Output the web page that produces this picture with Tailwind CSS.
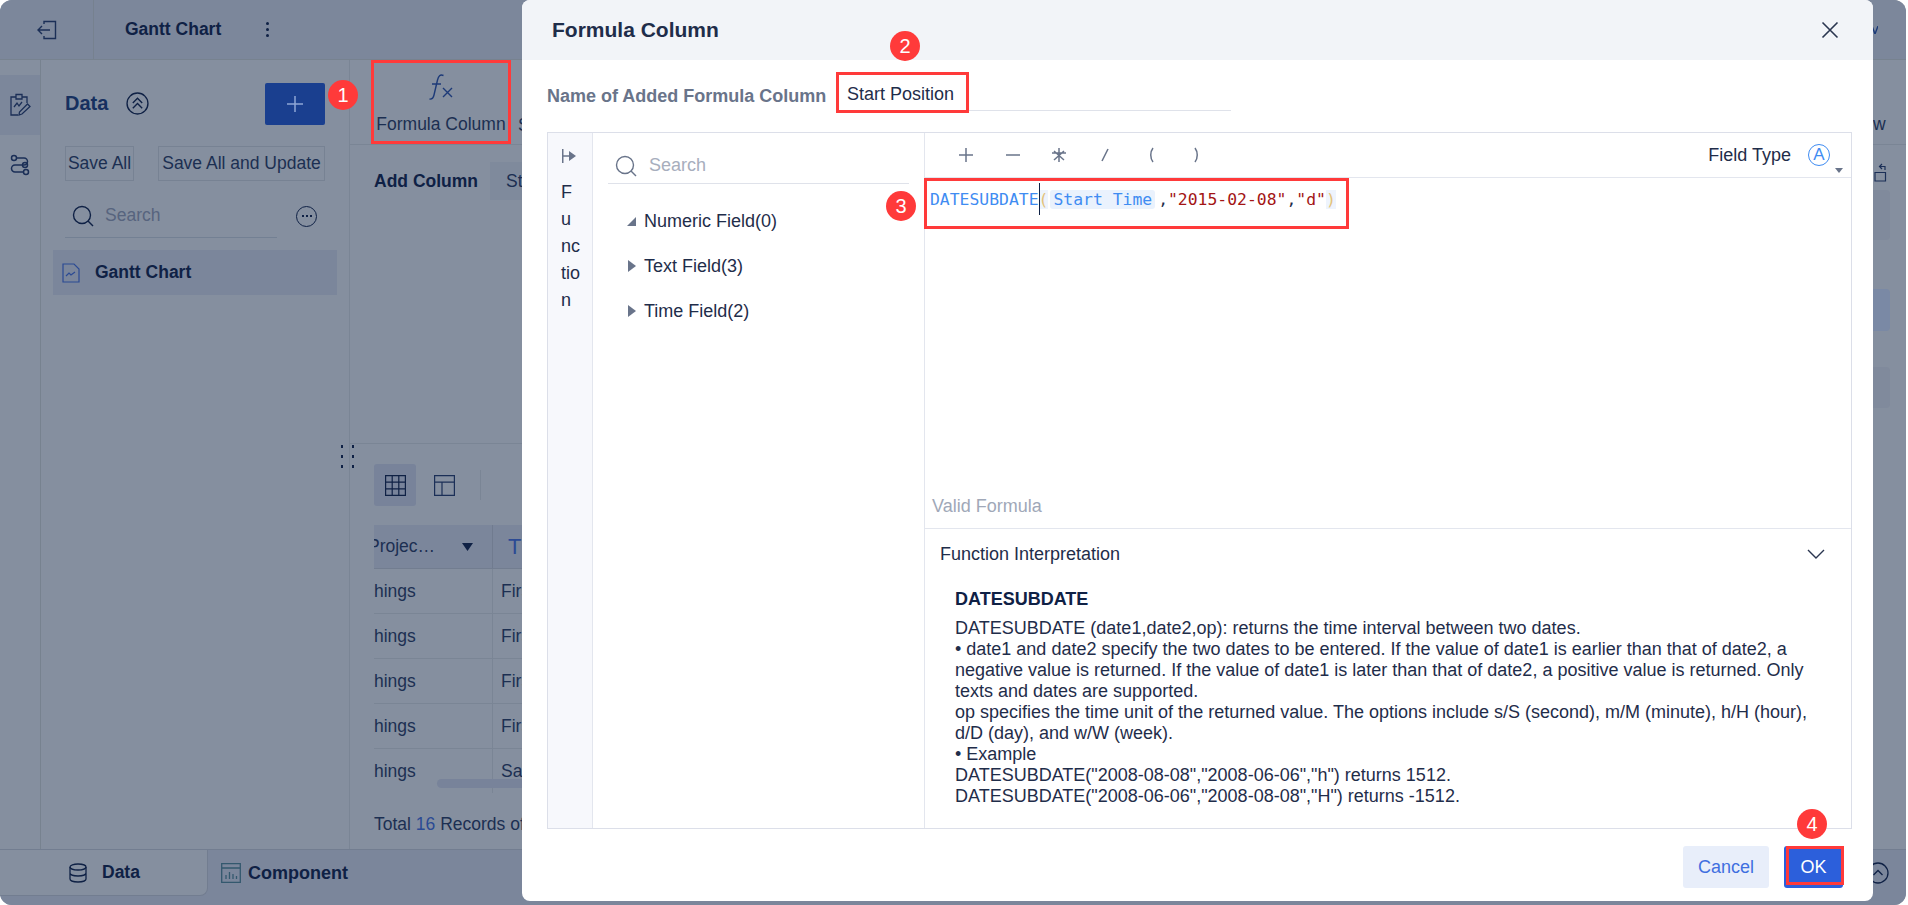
<!DOCTYPE html>
<html lang="en">
<head>
<meta charset="UTF-8">
<title>Formula Column</title>
<script src="https://cdn.jsdelivr.net/npm/@tailwindcss/browser@4"></script>
</head>
<body class="bg-white font-['Liberation_Sans',Arial,sans-serif] text-[#0f2145]">
<div class="relative w-[1908px] h-[905px] overflow-hidden">

  <!-- app behind the dimmed layer -->
  <div class="w-[1906px] h-[905px] flex flex-col bg-[#858f9f] rounded-[12px] overflow-hidden">
    <header class="h-[60px] shrink-0 flex items-center bg-[#7c879b] border-b border-[#77828f]">
      <div class="w-[94px] h-full flex items-center justify-center border-r border-[#76818f]">
        <svg class="w-[22px] h-[22px]" viewBox="0 0 22 22" fill="none" stroke="#1b2f57" stroke-width="1.4"><path d="M8 5V2.500h11.500v17H8V17M14 11H2M6 7l-4 4 4 4"/></svg>
      </div>
      <span class="ml-[31px] text-[17.500px] font-bold">Gantt Chart</span>
      <span class="ml-[45px] flex flex-col gap-[3px]"><i class="block w-[3px] h-[3px] rounded-full bg-[#0f2145]"></i><i class="block w-[3px] h-[3px] rounded-full bg-[#0f2145]"></i><i class="block w-[3px] h-[3px] rounded-full bg-[#0f2145]"></i></span>
      <svg class="ml-auto mr-[28px] w-[6px] h-[8px]" viewBox="0 0 6 8" fill="none" stroke="#1b3a78" stroke-width="1.400"><path d="M0 0l3 8 3-8"/></svg>
    </header>

    <div class="flex-1 flex min-h-0">
      <!-- icon rail -->
      <div class="w-[41px] shrink-0 border-r border-[#77828f] pt-[15px]">
        <div class="h-[60px] bg-[#7c879b] flex items-center justify-center">
          <svg class="w-[22px] h-[24px]" viewBox="0 0 22 24" fill="none" stroke="#1b2f57" stroke-width="1.3"><path d="M7 4H2v18h7M13 4h5v6M7 1.500h6V6H7zM5 14l3-4 2 3 3-4M13 21l-3 1 .5-3 8-8 2.500 2.500z"/></svg>
        </div>
        <div class="h-[60px] flex items-center justify-center">
          <svg class="w-[22px] h-[22px]" viewBox="0 0 22 22" fill="none" stroke="#1b2f57" stroke-width="1.5"><circle cx="5" cy="4" r="2.500"/><circle cx="16" cy="11" r="2.500"/><circle cx="17" cy="18" r="2.500"/><path d="M8 4h7a3.500 3.500 0 0 1 0 7H13M13 11H6a3.500 3.500 0 0 0 0 7h8"/></svg>
        </div>
      </div>

      <!-- data panel -->
      <div class="w-[309px] shrink-0 border-r border-[#7a8595] flex flex-col">
        <div class="h-[86px] shrink-0 flex items-center pl-[24px] pr-[24px]">
          <span class="text-[20px] font-bold text-[#16305f]">Data</span>
          <svg class="ml-[18px] w-[23px] h-[23px]" viewBox="0 0 22 22" fill="none" stroke="#0f2145" stroke-width="1.3"><circle cx="11" cy="11" r="10"/><path d="M6.500 10.500 11 6l4.500 4.500M6.500 15.500 11 11l4.500 4.500"/></svg>
          <span class="ml-auto mt-[2px] w-[60px] h-[42px] rounded-[2px] bg-[#1a3f8f] flex items-center justify-center">
            <svg class="w-[16px] h-[16px]" viewBox="0 0 16 16" stroke="#8fa6d6" stroke-width="1.5"><path d="M8 0v16M0 8h16"/></svg>
          </span>
        </div>
        <div class="flex pl-[24px] gap-[24px] text-[17.500px] text-[#1c2f52] whitespace-nowrap">
          <span class="w-[69px] h-[35px] flex items-center justify-center border border-[#778293]">Save All</span>
          <span class="w-[167px] h-[35px] flex items-center justify-center border border-[#778293]">Save All and Update</span>
        </div>
        <div class="mt-[13px] ml-[24px] flex items-center">
          <div class="w-[212px] h-[44px] flex items-center border-b border-[#738093] pl-[7px]">
            <svg class="w-[22px] h-[22px]" viewBox="0 0 22 22" fill="none" stroke="#0f2145" stroke-width="1.4"><circle cx="10" cy="10" r="8.500"/><path d="m16 16 5 5"/></svg>
            <span class="ml-[11px] text-[17.500px] text-[#57647e]">Search</span>
          </div>
          <span class="ml-[19px] shrink-0 w-[21px] h-[21px] rounded-full border border-[#0f2145] flex items-center justify-center gap-[2px]"><i class="block w-[2px] h-[2px] bg-[#0f2145]"></i><i class="block w-[2px] h-[2px] bg-[#0f2145]"></i><i class="block w-[2px] h-[2px] bg-[#0f2145]"></i></span>
        </div>
        <div class="mt-[12px] ml-[12px] w-[284px] h-[45px] bg-[#7b869b] flex items-center pl-[9px]">
          <svg class="w-[18px] h-[20px]" viewBox="0 0 18 20" fill="none" stroke="#2b4a94" stroke-width="1.2"><path d="M1 1h11l5 5v13H1zM4 13l3-3 2 2 4-3"/></svg>
          <span class="ml-[15px] text-[17.500px] font-bold">Gantt Chart</span>
        </div>
      </div>

      <!-- main area -->
      <div class="flex-1 min-w-0 flex flex-col overflow-hidden">
        <div class="h-[85px] shrink-0 border-b border-[#7a8595] flex pl-[21px] whitespace-nowrap">
          <div class="w-[140px] h-[84px] border-[3px] border-[#ff3a3a] flex flex-col items-center pt-[11px] text-[17.500px] text-[#1c2f52]">
            <svg class="w-[26px] h-[27px]" viewBox="0 0 26 27" fill="none" stroke="#1d3a78" stroke-width="1.400"><path d="M15.500 1.500C12 0 10.500 2 9.500 6L6 21c-.8 3.500-2 4.500-4.500 4M4 10h9M15 14l9 9M24 14l-9 9"/></svg>
            <span class="mt-[10px]">Formula Column</span>
          </div>
          <span class="ml-[7px] mt-[52px] text-[17.500px] text-[#1c2f52]">Sort</span>
        </div>
        <div class="h-[299px] shrink-0 pl-[24px] pt-[17px] border-b border-[#7a8595]">
          <div class="flex items-center">
            <span class="text-[17.500px] font-bold">Add Column</span>
            <span class="ml-[12px] h-[38px] w-[60px] bg-[#7f8a9c] flex items-center pl-[16px] text-[17.500px] text-[#1c2f52] overflow-hidden">Start</span>
          </div>
        </div>
        <div class="flex items-center pl-[24px] mt-[20px] gap-[7px]">
          <span class="w-[42px] h-[42px] rounded-[3px] bg-[#78839a] flex items-center justify-center">
            <svg class="w-[21px] h-[21px]" viewBox="0 0 21 21" fill="none" stroke="#0f2145" stroke-width="1.2"><path d="M.6.6h19.800v19.800H.6zM7.200.6v19.800M13.800.6v19.800M.6 7.200h19.800M.6 13.800h19.800"/></svg>
          </span>
          <span class="w-[42px] h-[42px] flex items-center justify-center">
            <svg class="w-[21px] h-[21px]" viewBox="0 0 21 21" fill="none" stroke="#1b2f57" stroke-width="1.2"><path d="M.6.6h19.800v19.800H.6zM.6 7.200h19.800M8 7.200v13.200"/></svg>
          </span>
          <span class="ml-[8px] w-px h-[30px] bg-[#7a8595]"></span>
        </div>
        <div class="ml-[24px] mt-[19px] text-[17.500px] text-[#1c2f52] overflow-hidden whitespace-nowrap">
          <div class="h-[44px] flex items-center bg-[#7b869b] border-b border-[#727d90]">
            <span class="w-[119px] shrink-0 flex items-center border-r border-[#707b8f] h-full"><span class="-ml-[6px]">Projec…</span><svg class="ml-[27px] w-[11px] h-[8px]" viewBox="0 0 11 8"><path d="M0 0h11L5.500 8z" fill="#0f2145"/></svg></span>
            <span class="ml-[15px] text-[22px] text-[#2b4a94]">T</span>
          </div>
          <div class="h-[45px] flex items-center border-b border-[#7a8595]"><span class="w-[119px] shrink-0 h-full flex items-center border-r border-[#7a8595]">hings</span><span class="ml-[8px]">First</span></div>
          <div class="h-[45px] flex items-center border-b border-[#7a8595]"><span class="w-[119px] shrink-0 h-full flex items-center border-r border-[#7a8595]">hings</span><span class="ml-[8px]">First</span></div>
          <div class="h-[45px] flex items-center border-b border-[#7a8595]"><span class="w-[119px] shrink-0 h-full flex items-center border-r border-[#7a8595]">hings</span><span class="ml-[8px]">First</span></div>
          <div class="h-[45px] flex items-center border-b border-[#7a8595]"><span class="w-[119px] shrink-0 h-full flex items-center border-r border-[#7a8595]">hings</span><span class="ml-[8px]">First</span></div>
          <div class="h-[44px] flex items-center"><span class="w-[119px] shrink-0 h-full flex items-center border-r border-[#7a8595]">hings</span><span class="ml-[8px]">Same</span></div>
        </div>
        <div class="ml-[24px] mt-[21px] leading-[20px] text-[17.500px] text-[#1c2f52]">Total <span class="text-[#2b4a94]">16</span> Records of</div>
      </div>

      <!-- right side panel, only a sliver shows past the dialog -->
      <div class="w-[46px] shrink-0 flex flex-col">
        <div class="h-[85px] shrink-0 border-b border-[#7a8595] pl-[13px] pt-[53px] text-[17.500px] leading-[22px] text-[#1c2f52]">w</div>
        <svg class="mt-[18px] ml-[14px] w-[13px] h-[19px]" viewBox="0 0 13 19" fill="none" stroke="#1b2f57" stroke-width="1.200"><path d="M1 9.500h10.500v8.500H1zM11 7V3.500H6M8 1 5.500 3.500 8 6"/></svg>
        <div class="mt-[8px] w-[30px] h-[50px] rounded-[4px] bg-[#808a9c]"></div>
        <div class="mt-[49px] w-[30px] h-[42px] rounded-[4px] bg-[#7a89a5]"></div>
        <div class="mt-[36px] w-[30px] h-[41px] rounded-[4px] bg-[#808a9c]"></div>
      </div>
    </div>

    <!-- bottom tabs -->
    <div class="h-[56px] shrink-0 flex bg-[#7b869b] border-t border-[#727d90]">
      <div class="w-[208px] h-[46px] bg-[#858f9f] rounded-br-[8px] border-b border-r border-[#727d90] flex items-center pl-[69px]">
        <svg class="w-[18px] h-[20px]" viewBox="0 0 18 20" fill="none" stroke="#0f2145" stroke-width="1.3"><ellipse cx="9" cy="4" rx="8" ry="3"/><path d="M1 4v12c0 1.700 3.600 3 8 3s8-1.300 8-3V4M1 10c0 1.700 3.600 3 8 3s8-1.300 8-3"/></svg>
        <span class="ml-[15px] text-[17.500px] font-bold">Data</span>
      </div>
      <div class="h-[46px] flex items-center pl-[13px]">
        <svg class="w-[20px] h-[20px]" viewBox="0 0 20 20" fill="none" stroke="#33586e" stroke-width="1.3"><path d="M.7.7h18.600v18.600H.7zM.7 5h18.600M5 16v-4M8.500 16V9M12 16v-5M15.500 16v-3"/></svg>
        <span class="ml-[7px] text-[18px] font-bold">Component</span>
      </div>
      <svg class="ml-auto mr-[17px] mt-[12px] w-[22px] h-[22px]" viewBox="0 0 22 22" fill="none" stroke="#0f2145" stroke-width="1.3"><circle cx="11" cy="11" r="10"/><path d="M6.500 13 11 8.500l4.500 4.500"/></svg>
    </div>
  </div>

  <!-- splitter grip and table scrollbar -->
  <div class="absolute left-[341px] top-[445px] grid grid-cols-2 gap-x-[9px] gap-y-[7px]">
    <i class="block w-[2px] h-[3px] bg-[#0f2145]"></i><i class="block w-[2px] h-[3px] bg-[#0f2145]"></i>
    <i class="block w-[2px] h-[3px] bg-[#0f2145]"></i><i class="block w-[2px] h-[3px] bg-[#0f2145]"></i>
    <i class="block w-[2px] h-[3px] bg-[#0f2145]"></i><i class="block w-[2px] h-[3px] bg-[#0f2145]"></i>
  </div>
  <div class="absolute left-[437px] top-[779px] w-[90px] h-[9px] rounded-full bg-[#78839a]"></div>

  <!-- formula column dialog -->
  <div class="absolute left-[522px] top-0 w-[1351px] h-[901px] bg-white rounded-[8px] overflow-hidden flex flex-col">
    <div class="h-[60px] shrink-0 bg-[#f2f4f8] flex items-center pl-[30px] pr-[34px]">
      <span class="text-[21px] font-bold text-[#1f2d4a]">Formula Column</span>
      <svg class="ml-auto w-[18px] h-[18px]" viewBox="0 0 18 18" stroke="#2a3650" stroke-width="1.600"><path d="M1.500 1.500l15 15M16.500 1.500l-15 15"/></svg>
    </div>
    <div class="h-[72px] shrink-0 flex items-end pl-[25px] pb-[21px]">
      <span class="w-[290px] mb-[4px] text-[18px] leading-[22px] font-bold text-[#69748a] whitespace-nowrap">Name of Added Formula Column</span>
      <span class="w-[394px] h-[40px] flex items-center pl-[10px] pt-[7px] border-b border-[#dfe2ea] text-[18px] text-[#1f2d4a]">Start Position</span>
    </div>
    <div class="ml-[25px] w-[1305px] h-[697px] border border-[#dcdfe9] flex">
      <div class="w-[45px] shrink-0 bg-[#f7f8fc] border-r border-[#e3e6ee] pl-[13px] pt-[16px] text-[18px] leading-[27px] text-[#1f2d4a]">
        <svg class="w-[16px] h-[14px] mb-[16px]" viewBox="0 0 16 14" fill="#69748a"><path d="M1 0h1.500v14H1zM2.500 6.200H8V2l7 5-7 5V7.800H2.500z"/></svg>
        <div class="w-[22px]">F<br>u<br>nc<br>tio<br>n</div>
      </div>
      <div class="w-[332px] shrink-0 border-r border-[#e3e6ee] text-[18px] text-[#1f2d4a]">
        <div class="mx-[15px] mt-[7px] h-[44px] flex items-center pl-[7px] pt-[8px] border-b border-[#dfe2ea]">
          <svg class="w-[22px] h-[22px]" viewBox="0 0 22 22" fill="none" stroke="#69748a" stroke-width="1.4"><circle cx="10" cy="10" r="8.500"/><path d="m16 16 5 5"/></svg>
          <span class="ml-[12px] text-[#a7aebd]">Search</span>
        </div>
        <div class="pl-[34px] mt-[25px] flex flex-col gap-[21px]">
          <div class="flex items-center h-[24px]"><svg class="w-[9px] h-[9px]" viewBox="0 0 9 9"><path d="M9 0v9H0z" fill="#69748a"/></svg><span class="ml-[8px]">Numeric Field(0)</span></div>
          <div class="flex items-center h-[24px]"><svg class="w-[9px] h-[12px]" viewBox="0 0 9 12"><path d="M1 0l8 6-8 6z" fill="#69748a"/></svg><span class="ml-[8px]">Text Field(3)</span></div>
          <div class="flex items-center h-[24px]"><svg class="w-[9px] h-[12px]" viewBox="0 0 9 12"><path d="M1 0l8 6-8 6z" fill="#69748a"/></svg><span class="ml-[8px]">Time Field(2)</span></div>
        </div>
      </div>
      <div class="flex-1 min-w-0 flex flex-col">
        <div class="h-[45px] shrink-0 border-b border-[#e3e6ee] flex items-center pl-[34px] pr-[21px] text-[#69748a]">
          <svg class="w-[14px] h-[14px]" viewBox="0 0 14 14" stroke="#69748a" stroke-width="1.5"><path d="M7 0v14M0 7h14"/></svg>
          <svg class="ml-[33px] w-[14px] h-[14px]" viewBox="0 0 14 14" stroke="#69748a" stroke-width="1.5"><path d="M0 7h14"/></svg>
          <svg class="ml-[32px] w-[14px] h-[14px]" viewBox="0 0 14 14" stroke="#69748a" stroke-width="1.5"><path d="M0 5h14M7 0v14M2 12l10-9M12 12 2 3"/></svg>
          <svg class="ml-[33px] w-[12px] h-[14px]" viewBox="0 0 12 14" stroke="#69748a" stroke-width="1.5"><path d="M9 1 3 13"/></svg>
          <svg class="ml-[36px] w-[8px] h-[16px]" viewBox="0 0 8 16" fill="none" stroke="#69748a" stroke-width="1.5"><path d="M6 1C3 5 3 11 6 15"/></svg>
          <svg class="ml-[38px] w-[8px] h-[16px]" viewBox="0 0 8 16" fill="none" stroke="#69748a" stroke-width="1.5"><path d="M2 1c3 4 3 10 0 14"/></svg>
          <span class="ml-auto text-[18px] text-[#1f2d4a]">Field Type</span>
          <span class="relative ml-[17px] w-[22px] h-[22px] rounded-full border-[1.5px] border-[#3f8cf2] flex items-center justify-center text-[17px] text-[#3f8cf2]">A
            <svg class="absolute left-[26px] top-[23px] w-[8px] h-[5px]" viewBox="0 0 8 5"><path d="M0 0h8L4 5z" fill="#69748a"/></svg>
          </span>
        </div>
        <div class="h-[303px] shrink-0 pl-[5px] pt-[10px] font-['DejaVu_Sans_Mono',monospace] text-[16.400px] leading-[24px] whitespace-nowrap">
          <span class="text-[#3f8cf2]">DATESUBDATE</span><span class="relative text-[#e3c27a] bg-[#eef4fd]"><i class="absolute left-0 top-[-7px] h-[32px] w-px bg-[#0f2145]"></i>(</span><span class="ml-[2px] text-[#3f8cf2] bg-[#eaf2fd] rounded-[3px] px-[3px]">Start Time</span><span class="ml-[3px] text-[#1f2d4a]">,</span><span class="text-[#a31515]">"2015-02-08"</span><span class="text-[#1f2d4a]">,</span><span class="text-[#a31515]">"d"</span><span class="text-[#e3c27a] bg-[#eef4fd]">)</span>
        </div>
        <div class="h-[48px] shrink-0 border-b border-[#e3e6ee] pl-[7px] pt-[16px] text-[18px] leading-[18px] text-[#a0a8b8]">Valid Formula</div>
        <div class="h-[50px] shrink-0 flex items-center pl-[15px] pr-[26px] text-[18px] text-[#1f2d4a]">
          <span>Function Interpretation</span>
          <svg class="ml-auto w-[18px] h-[10px]" viewBox="0 0 18 10" fill="none" stroke="#2a3650" stroke-width="1.400"><path d="m1 1 8 8 8-8"/></svg>
        </div>
        <div class="pl-[30px] pr-[26px] pt-[10px] text-[18px] leading-[21px] text-[#1f2d4a]">
          <div class="font-bold text-[#0f2145] mb-[8px]">DATESUBDATE</div>
          DATESUBDATE (date1,date2,op): returns the time interval between two dates.<br>
          • date1 and date2 specify the two dates to be entered. If the value of date1 is earlier than that of date2, a negative value is returned. If the value of date1 is later than that of date2, a positive value is returned. Only texts and dates are supported.<br>
          op specifies the time unit of the returned value. The options include s/S (second), m/M (minute), h/H (hour), d/D (day), and w/W (week).<br>
          • Example<br>
          DATESUBDATE("2008-08-08","2008-06-06","h") returns 1512.<br>
          DATESUBDATE("2008-06-06","2008-08-08","H") returns -1512.
        </div>
      </div>
    </div>
    <div class="flex-1 flex items-start justify-end pt-[17px] pr-[30px] gap-[15px] text-[18px]">
      <span class="w-[86px] h-[42px] rounded-[3px] bg-[#e8eefa] text-[#3f6fe0] flex items-center justify-center">Cancel</span>
      <span class="w-[59px] h-[42px] rounded-[3px] bg-[#2c5fdb] text-white flex items-center justify-center">OK</span>
    </div>
  </div>

  <!-- numbered annotations -->
  <div class="absolute left-[836px] top-[72px] w-[133px] h-[41px] border-[3px] border-[#ff3a3a]"></div>
  <div class="absolute left-[924px] top-[178px] w-[425px] h-[51px] border-[3px] border-[#ff3a3a]"></div>
  <div class="absolute left-[1786px] top-[846px] w-[58px] h-[39px] border-[3px] border-[#ff3a3a]"></div>
  <span class="absolute left-[328px] top-[80px] w-[30px] h-[30px] rounded-full bg-[#ff3a3a] text-white text-[20px] flex items-center justify-center">1</span>
  <span class="absolute left-[890px] top-[31px] w-[30px] h-[30px] rounded-full bg-[#ff3a3a] text-white text-[20px] flex items-center justify-center">2</span>
  <span class="absolute left-[886px] top-[191px] w-[30px] h-[30px] rounded-full bg-[#ff3a3a] text-white text-[20px] flex items-center justify-center">3</span>
  <span class="absolute left-[1797px] top-[809px] w-[30px] h-[30px] rounded-full bg-[#ff3a3a] text-white text-[20px] flex items-center justify-center">4</span>
</div>
</body>
</html>
